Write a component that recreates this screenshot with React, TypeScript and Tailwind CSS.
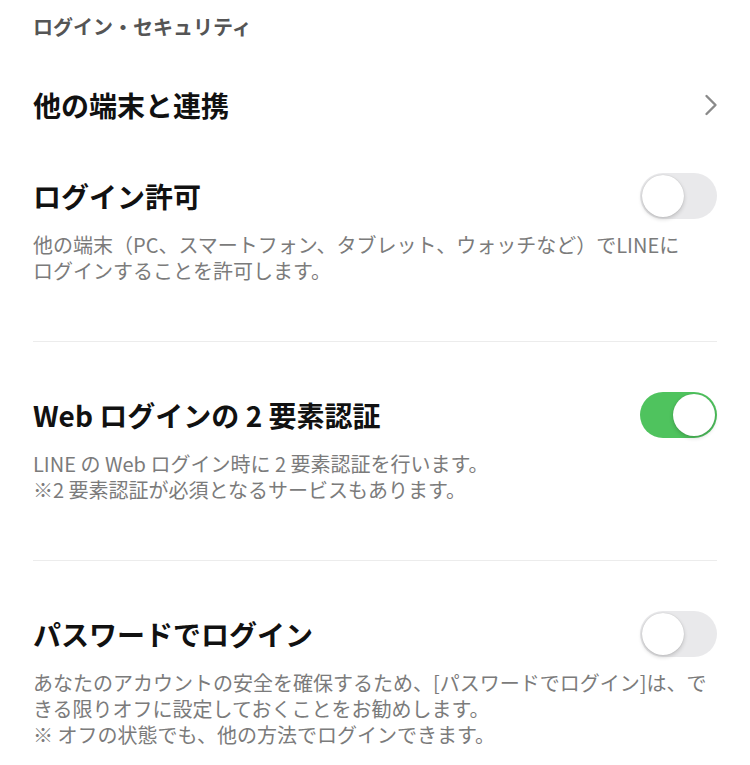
import React, { useState } from "react";

const FONT = { fontFamily: '"Noto Sans CJK JP", "Noto Sans", sans-serif' };

function Toggle({ on, onChange }: { on: boolean; onChange: () => void }) {
  return (
    <button
      onClick={onChange}
      className={`relative h-[46px] w-[77px] shrink-0 rounded-full transition ${
        on ? "bg-[#4fc35e]" : "bg-[#e9e9eb]"
      }`}
    >
      <span
        className={`absolute top-[2px] h-[42px] w-[42px] rounded-full bg-white shadow-[0_2px_4px_rgba(0,0,0,0.18),0_0_1px_rgba(0,0,0,0.2)] transition ${
          on ? "left-[33px]" : "left-[2px]"
        }`}
      />
    </button>
  );
}

function Chevron() {
  return (
    <svg width="14" height="22" viewBox="0 0 14 22" fill="none" className="mr-[-1px]">
      <path
        d="M2.5 2 L11.5 11 L2.5 20"
        stroke="#8a8a8a"
        strokeWidth="2.4"
        strokeLinecap="round"
        strokeLinejoin="round"
      />
    </svg>
  );
}

function Desc({ lines }: { lines: string[] }) {
  return (
    <div className="mt-[13px] text-[20px] leading-[26px] text-[#7b7b7b]">
      {lines.map((l) => (
        <div key={l} className="h-[26px] whitespace-nowrap">
          {l}
        </div>
      ))}
    </div>
  );
}

function Title({ children }: { children: React.ReactNode }) {
  return (
    <span className="text-[28px] font-bold leading-[46px] text-[#111111]">{children}</span>
  );
}

export default function App() {
  const [allowLogin, setAllowLogin] = useState(false);
  const [webTwoFactor, setWebTwoFactor] = useState(true);
  const [passwordLogin, setPasswordLogin] = useState(false);

  return (
    <div className="min-h-[765px] w-[750px] bg-white px-[33px]" style={FONT}>
      {/* Section header */}
      <div className="pt-[14px] text-[20px] font-bold leading-[26px] text-[#555555]">
        ログイン・セキュリティ
      </div>

      {/* 他の端末と連携 */}
      <div className="mt-[42px] flex h-[46px] items-center justify-between">
        <Title>他の端末と連携</Title>
        <Chevron />
      </div>

      {/* ログイン許可 */}
      <div className="border-b border-[#ececec] pb-[57px] pt-[45px]">
        <div className="flex h-[46px] items-center justify-between">
          <Title>ログイン許可</Title>
          <Toggle on={allowLogin} onChange={() => setAllowLogin(!allowLogin)} />
        </div>
        <Desc
          lines={[
            "他の端末（PC、スマートフォン、タブレット、ウォッチなど）でLINEに",
            "ログインすることを許可します。",
          ]}
        />
      </div>

      {/* Web 2FA */}
      <div className="border-b border-[#ececec] pb-[57px] pt-[50px]">
        <div className="flex h-[46px] items-center justify-between">
          <Title>Web ログインの 2 要素認証</Title>
          <Toggle on={webTwoFactor} onChange={() => setWebTwoFactor(!webTwoFactor)} />
        </div>
        <Desc
          lines={[
            "LINE の Web ログイン時に 2 要素認証を行います。",
            "※2 要素認証が必須となるサービスもあります。",
          ]}
        />
      </div>

      {/* パスワードでログイン */}
      <div className="pt-[50px]">
        <div className="flex h-[46px] items-center justify-between">
          <Title>パスワードでログイン</Title>
          <Toggle on={passwordLogin} onChange={() => setPasswordLogin(!passwordLogin)} />
        </div>
        <Desc
          lines={[
            "あなたのアカウントの安全を確保するため、[パスワードでログイン]は、で",
            "きる限りオフに設定しておくことをお勧めします。",
            "※ オフの状態でも、他の方法でログインできます。",
          ]}
        />
      </div>
    </div>
  );
}
